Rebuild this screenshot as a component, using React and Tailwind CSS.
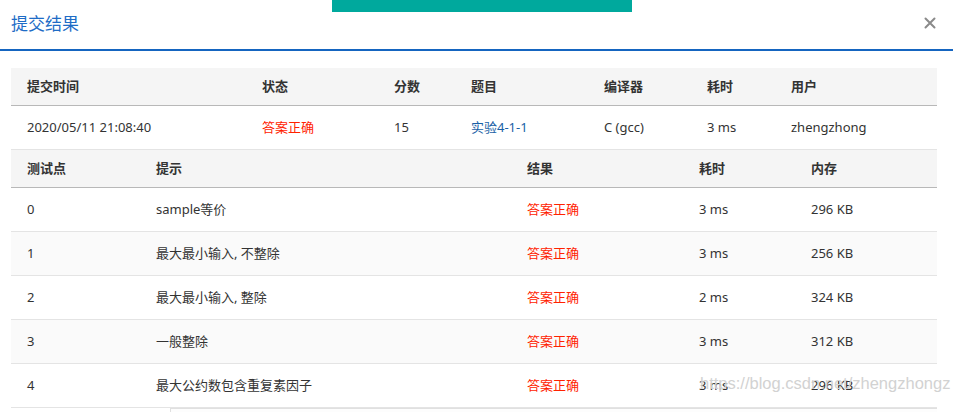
import React from "react";

const font = { fontFamily: '"Noto Sans", "Noto Sans CJK SC", sans-serif' };

const summaryCols = [
  { label: "提交时间", w: "w-[235px]" },
  { label: "状态", w: "w-[132px]" },
  { label: "分数", w: "w-[77px]" },
  { label: "题目", w: "w-[133px]" },
  { label: "编译器", w: "w-[103px]" },
  { label: "耗时", w: "w-[84px]" },
  { label: "用户", w: "flex-1" },
];

const caseCols = [
  { label: "测试点", w: "w-[129px]" },
  { label: "提示", w: "w-[371px]" },
  { label: "结果", w: "w-[172px]" },
  { label: "耗时", w: "w-[112px]" },
  { label: "内存", w: "flex-1" },
];

const cases = [
  { id: "0", hint: "sample等价", time: "3 ms", mem: "296 KB" },
  { id: "1", hint: "最大最小输入, 不整除", time: "3 ms", mem: "256 KB" },
  { id: "2", hint: "最大最小输入, 整除", time: "2 ms", mem: "324 KB" },
  { id: "3", hint: "一般整除", time: "3 ms", mem: "312 KB" },
  { id: "4", hint: "最大公约数包含重复素因子", time: "3 ms", mem: "296 KB" },
];

function HeadRow({ cols }) {
  return (
    <div className="flex h-[38px] items-center bg-[#f5f5f5] border-b border-[#b8b8b8] text-[13px] font-bold text-[#333]">
      {cols.map((c) => (
        <div key={c.label} className={`${c.w} pl-4`}>
          {c.label}
        </div>
      ))}
    </div>
  );
}

export default function App() {
  return (
    <div className="relative w-[953px] h-[412px] overflow-hidden bg-white text-[#333]" style={font}>
      {/* top teal tab */}
      <div className="absolute left-[332px] top-0 w-[300px] h-[12px] bg-[#00a99d]" />

      {/* dialog header */}
      <div className="flex h-[51px] items-center justify-between pl-[11px] pr-[17px] border-b-2 border-[#1565c0]">
        <h2 className="text-[17px] text-[#1e6cc6] leading-none -mt-[2px]">提交结果</h2>
        <button className="-mt-[4px]">
          <svg width="12" height="12" viewBox="0 0 12 12">
            <path d="M1.5 1.5 L10.5 10.5 M10.5 1.5 L1.5 10.5" stroke="#8a8a8a" strokeWidth="2" strokeLinecap="round" />
          </svg>
        </button>
      </div>

      <div className="mt-[17px] mx-[11px] w-[926px]">
        {/* summary table */}
        <HeadRow cols={summaryCols} />
        <div className="flex h-[44px] items-center border-b border-[#e4e4e4] text-[13px]">
          <div className="w-[235px] pl-4">2020/05/11 21:08:40</div>
          <div className="w-[132px] pl-4 text-[#ff2200]">答案正确</div>
          <div className="w-[77px] pl-4">15</div>
          <div className="w-[133px] pl-4 text-[#1a5fa6]">实验4-1-1</div>
          <div className="w-[103px] pl-4">C (gcc)</div>
          <div className="w-[84px] pl-4">3 ms</div>
          <div className="flex-1 pl-4">zhengzhong</div>
        </div>

        {/* test case table */}
        <HeadRow cols={caseCols} />
        {cases.map((r, i) => (
          <div
            key={r.id}
            className={`flex h-[44px] items-center border-b border-[#e4e4e4] text-[13px] ${i % 2 === 1 ? "bg-[#fafafa]" : "bg-white"}`}
          >
            <div className="w-[129px] pl-4">{r.id}</div>
            <div className="w-[371px] pl-4">{r.hint}</div>
            <div className="w-[172px] pl-4 text-[#ff2200]">答案正确</div>
            <div className="w-[112px] pl-4">{r.time}</div>
            <div className="flex-1 pl-4">{r.mem}</div>
          </div>
        ))}
        <div className="ml-[159px] h-[6px] border-l border-t border-[#e0e0e0] bg-[#fdfdfd]" />
      </div>

      {/* watermark */}
      <div
        className="pointer-events-none absolute left-[700px] top-[375px] text-[16.5px] leading-none text-[#d2d2d2]"
        style={{ fontFamily: '"Liberation Sans", Arial, sans-serif' }}
      >
        https://blog.csdn.net/zhengzhongz
      </div>
    </div>
  );
}
